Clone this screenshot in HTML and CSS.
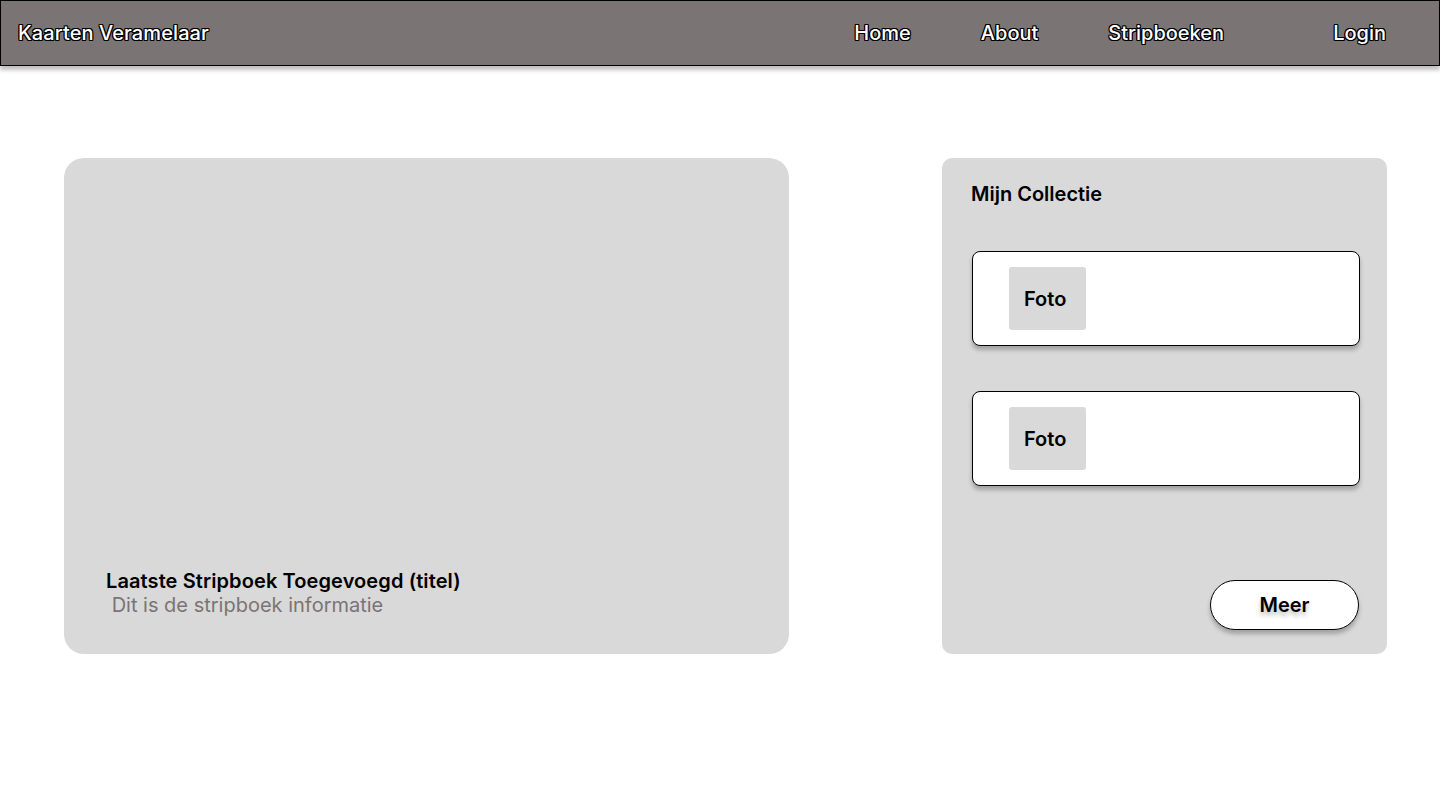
FILE: index.html
```html
<!DOCTYPE html>
<html lang="nl">
<head>
<meta charset="utf-8">
<title>Kaarten Veramelaar</title>
<link rel="stylesheet" href="styles.css">
</head>
<body>
<header class="topbar">
  <div class="brand">Kaarten Veramelaar</div>
  <nav class="nav">
    <a class="nav-link" href="#">Home</a>
    <a class="nav-link" href="#">About</a>
    <a class="nav-link" href="#">Stripboeken</a>
    <a class="nav-link login" href="#">Login</a>
  </nav>
</header>
<main class="content">
  <section class="feature">
    <h2 class="feature-title">Laatste Stripboek Toegevoegd (titel)</h2>
    <p class="feature-info"> Dit is de stripboek informatie</p>
  </section>
  <aside class="collection">
    <h2 class="collection-title">Mijn Collectie</h2>
    <div class="item"><div class="photo">Foto</div></div>
    <div class="item"><div class="photo">Foto</div></div>
    <div class="actions"><button class="more">Meer</button></div>
  </aside>
</main>
</body>
</html>
```
FILE: styles.css
```css
* { box-sizing: border-box; }
html, body { margin: 0; padding: 0; background: #fff; }
body { font-family: Inter, "Noto Sans", sans-serif; color: #000; }

.topbar {
  height: 66px;
  background: #7a7474;
  border: 1px solid #000;
  box-shadow: 0 4px 4px rgba(0,0,0,0.25);
  display: flex;
  align-items: center;
  justify-content: space-between;
  padding: 0 53px 0 17px;
}
.brand,
.nav-link {
  font-family: Inter, sans-serif;
  font-size: 20px;
  font-weight: 500;
  color: #fff;
  text-decoration: none;
  text-shadow:
    1px 0 0 #000, -1px 0 0 #000, 0 1px 0 #000, 0 -1px 0 #000,
    1px 1px 0 #000, -1px 1px 0 #000, 1px -1px 0 #000, -1px -1px 0 #000;
}
.brand { letter-spacing: 0.1px; }
.nav { display: flex; align-items: center; gap: 70px; }
.nav-link.login { margin-left: 39px; }

.content {
  display: flex;
  justify-content: space-between;
  padding: 92px 53px 0 64px;
}
.feature {
  width: 725px;
  height: 496px;
  background: #d9d9d9;
  border-radius: 20px;
  display: flex;
  flex-direction: column;
  justify-content: flex-end;
  padding: 0 42px 37px;
}
.feature-title {
  margin: 0;
  font-size: 20px;
  font-weight: 600;
  line-height: 24px;
  letter-spacing: 0.1px;
}
.feature-info {
  margin: 0;
  font-size: 20px;
  font-weight: 400;
  line-height: 24px;
  color: #7a7474;
  white-space: pre;
}

.collection {
  width: 445px;
  height: 496px;
  background: #d9d9d9;
  border-radius: 10px;
  padding: 24px 27px 24px 30px;
  display: flex;
  flex-direction: column;
}
.collection-title {
  margin: 0 0 45px -1px;
  font-size: 20px;
  font-weight: 600;
  line-height: 24px;
}
.item {
  height: 95px;
  background: #fff;
  border: 1px solid #000;
  border-radius: 8px;
  box-shadow: 0 4px 4px rgba(0,0,0,0.25);
  padding: 15px 36px;
  margin-bottom: 45px;
}
.photo {
  width: 77px;
  height: 63px;
  background: #d9d9d9;
  border-radius: 3px;
  display: flex;
  align-items: center;
  padding-left: 15px;
  font-size: 20px;
  font-weight: 600;
}
.actions {
  margin-top: auto;
  display: flex;
  justify-content: flex-end;
}
.more {
  width: 149px;
  height: 50px;
  margin-right: 1px;
  background: #fff;
  border: 1px solid #000;
  border-radius: 25px;
  box-shadow: 0 4px 4px rgba(0,0,0,0.25);
  font-family: Inter, sans-serif;
  font-size: 20px;
  font-weight: 600;
  color: #000;
  text-shadow: 0 4px 4px rgba(0,0,0,0.25);
  padding: 0;
}
```
